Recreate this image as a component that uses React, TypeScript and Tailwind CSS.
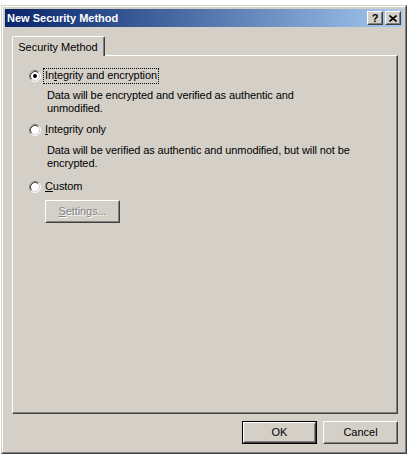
import React from "react";

const FONT = { fontFamily: '"Liberation Sans", Arial, sans-serif' };

function Radio({ checked }: { checked?: boolean }) {
  return (
    <svg width="12" height="12" viewBox="0 0 12 12" className="shrink-0">
      <circle cx="6" cy="6" r="5" fill="#ffffff" />
      <path d="M2.11 9.89 A5.5 5.5 0 0 1 9.89 2.11" fill="none" stroke="#808080" strokeWidth="1" />
      <path d="M9.89 2.11 A5.5 5.5 0 0 1 2.11 9.89" fill="none" stroke="#ffffff" strokeWidth="1" />
      <path d="M2.82 9.18 A4.5 4.5 0 0 1 9.18 2.82" fill="none" stroke="#404040" strokeWidth="1" />
      <path d="M9.18 2.82 A4.5 4.5 0 0 1 2.82 9.18" fill="none" stroke="#d4d0c8" strokeWidth="1" />
      {checked && <circle cx="6" cy="6" r="2" fill="#000000" />}
    </svg>
  );
}

function ClassicButton({ children, isDefault, disabled }: { children: React.ReactNode; isDefault?: boolean; disabled?: boolean }) {
  const face = (
    <div className="h-full w-full border border-t-white border-l-white border-r-[#404040] border-b-[#404040]">
      <div className="h-full w-full border border-t-[#d4d0c8] border-l-[#d4d0c8] border-r-[#808080] border-b-[#808080] flex items-center justify-center text-[11px]">
        {disabled ? (
          <span className="text-[#808080] [text-shadow:1px_1px_0_#ffffff]">{children}</span>
        ) : (
          <span className="text-black">{children}</span>
        )}
      </div>
    </div>
  );
  return (
    <div className={`w-[75px] h-[23px] bg-[#d4d0c8] ${isDefault ? "border border-black" : ""}`}>
      {face}
    </div>
  );
}

function TitleButton({ children }: { children: React.ReactNode }) {
  return (
    <div className="w-[16px] h-[14px] bg-[#d4d0c8] border border-t-white border-l-white border-r-[#404040] border-b-[#404040]">
      <div className="h-full w-full border border-t-[#d4d0c8] border-l-[#d4d0c8] border-r-[#808080] border-b-[#808080] flex items-center justify-center">
        {children}
      </div>
    </div>
  );
}

function Option({ label, accel, checked, focused }: { label: string; accel: number; checked?: boolean; focused?: boolean }) {
  const text = (
    <>
      {label.slice(0, accel)}
      <span className="underline underline-offset-[1px]">{label[accel]}</span>
      {label.slice(accel + 1)}
    </>
  );
  return (
    <div className="flex items-center h-[17px] pl-[16px]">
      <Radio checked={checked} />
      <div className={`ml-[2px] px-[1px] h-[16px] flex items-center text-[11px] text-black tracking-[-0.1px] ${focused ? "border border-dotted border-black" : "border border-transparent"}`}>
        {text}
      </div>
    </div>
  );
}

export default function App() {
  return (
    <div className="w-[415px] h-[462px] bg-white pt-[5px] pl-[1px]" style={FONT}>
      <div className="w-[406px] h-[449px] bg-[#d4d0c8] border border-t-[#d4d0c8] border-l-[#d4d0c8] border-r-[#404040] border-b-[#404040]">
        <div className="h-full w-full border border-t-white border-l-white border-r-[#808080] border-b-[#808080] p-[2px] flex flex-col">
          {/* title bar */}
          <div className="h-[18px] bg-gradient-to-r from-[#0a246a] to-[#a6caf0] flex items-center pl-[2px] pr-[2px]">
            <span className="text-white font-bold text-[11px] leading-none">New Security Method</span>
            <div className="ml-auto flex gap-[2px]">
              <TitleButton>
                <span className="text-[11px] font-bold leading-none text-black">?</span>
              </TitleButton>
              <TitleButton>
                <svg width="8" height="7" viewBox="0 0 8 7">
                  <path d="M0.5 0.5 L7.5 6.5 M7.5 0.5 L0.5 6.5" stroke="#000" strokeWidth="1.6" />
                </svg>
              </TitleButton>
            </div>
          </div>

          {/* tab */}
          <div className="ml-[7px] mt-[9px] flex">
            <div className="relative z-10 -mb-[1px] w-[93px] h-[20px] bg-[#d4d0c8] border-t border-l border-r border-t-white border-l-white border-r-[#404040] rounded-tl-[2px] rounded-tr-[2px]">
              <div className="h-full w-full border-r border-r-[#808080] flex items-center justify-center text-[11px] text-black pt-[1px]">
                Security Method
              </div>
            </div>
          </div>

          {/* panel */}
          <div className="ml-[7px] w-[386px] h-[359px] border border-t-white border-l-white border-r-[#404040] border-b-[#404040]">
            <div className="h-full w-full border-r border-b border-r-[#808080] border-b-[#808080] pt-[11px] text-[11px] text-black tracking-[-0.1px]">
              <Option label="Integrity and encryption" accel={2} checked focused />
              <div className="pl-[34px] mt-[5px] leading-[13px]">
                Data will be encrypted and verified as authentic and
                <br />
                unmodified.
              </div>
              <div className="mt-[6px]">
                <Option label="Integrity only" accel={0} />
              </div>
              <div className="pl-[34px] mt-[6px] leading-[13px]">
                Data will be verified as authentic and unmodified, but will not be
                <br />
                encrypted.
              </div>
              <div className="mt-[8px]">
                <Option label="Custom" accel={0} />
              </div>
              <div className="pl-[32px] mt-[5px]">
                <ClassicButton disabled>
                  <span className="underline underline-offset-[1px]">S</span>ettings...
                </ClassicButton>
              </div>
            </div>
          </div>

          {/* buttons */}
          <div className="ml-[7px] w-[386px] mt-[7px] flex justify-end gap-[6px]">
            <ClassicButton isDefault>OK</ClassicButton>
            <ClassicButton>Cancel</ClassicButton>
          </div>
        </div>
      </div>
    </div>
  );
}
